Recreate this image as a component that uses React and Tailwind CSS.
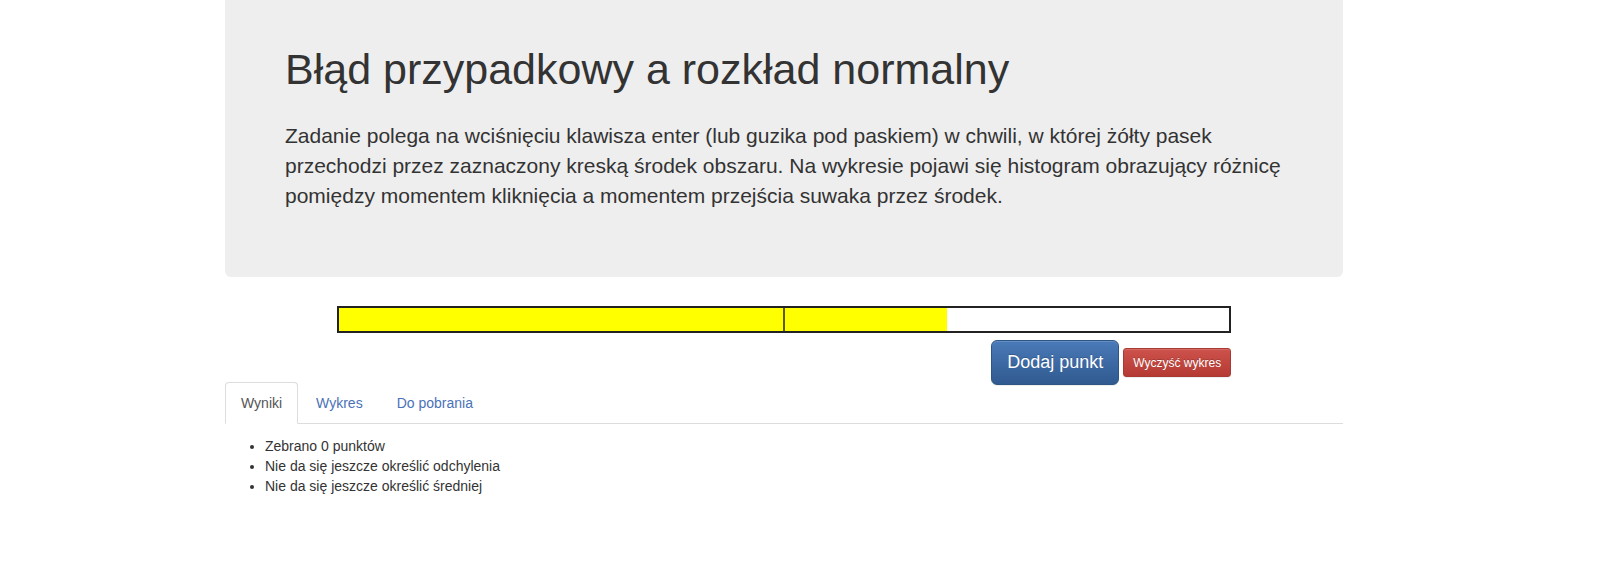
import { useState } from "react";

const font = { fontFamily: '"Liberation Sans", Arial, Helvetica, sans-serif' };

export default function App() {
  const [tab, setTab] = useState("wyniki");
  const progress = 68.3;

  const tabs = [
    { id: "wyniki", label: "Wyniki" },
    { id: "wykres", label: "Wykres" },
    { id: "pobrania", label: "Do pobrania" },
  ];

  return (
    <div className="min-h-[572px] bg-white text-[#333]" style={font}>
      <div className="ml-[225px] w-[1118px]">
        {/* Jumbotron */}
        <div className="bg-[#eee] rounded-b-[6px] px-[60px] pt-[46px] h-[277px]">
          <h1 className="text-[43px] leading-[46px] font-normal text-[#333]">
            Błąd przypadkowy a rozkład normalny
          </h1>
          <p className="mt-[29px] text-[21px] leading-[30px]">
            Zadanie polega na wciśnięciu klawisza enter (lub guzika pod paskiem) w chwili, w której żółty pasek
            przechodzi przez zaznaczony kreską środek obszaru. Na wykresie pojawi się histogram obrazujący różnicę
            pomiędzy momentem kliknięcia a momentem przejścia suwaka przez środek.
          </p>
        </div>

        {/* Bar + buttons */}
        <div className="w-[80%] mx-auto mt-[29px]">
          <div className="relative h-[27px] border-2 border-[#222] bg-white">
            <div className="h-full bg-[#ffff00]" style={{ width: `${progress}%` }} />
            <div className="absolute top-0 bottom-0 left-1/2 w-[2px] -translate-x-1/2 bg-[#5c5c00]" />
          </div>

          <div className="flex justify-end items-center gap-[4px] mt-[7px]">
            <button className="w-[128px] h-[45px] text-[18px] leading-[23px] text-white rounded-[6px] border border-[#2e5685] bg-gradient-to-b from-[#4a7ab8] to-[#305a90] shadow-[inset_0_1px_0_rgba(255,255,255,0.15),0_1px_1px_rgba(0,0,0,0.075)] [text-shadow:0_-1px_0_rgba(0,0,0,0.2)]">
              Dodaj punkt
            </button>
            <button className="w-[108px] h-[29px] text-[12px] leading-[18px] text-white rounded-[3px] border border-[#a93a33] bg-gradient-to-b from-[#cc524b] to-[#b43a33] shadow-[inset_0_1px_0_rgba(255,255,255,0.15),0_1px_1px_rgba(0,0,0,0.075)] [text-shadow:0_-1px_0_rgba(0,0,0,0.2)]">
              Wyczyść wykres
            </button>
          </div>
        </div>

        {/* Tabs */}
        <ul className="flex border-b border-[#ddd] -mt-[3px] text-[14px]">
          {tabs.map((t) => (
            <li key={t.id} className="-mb-px mr-[2px]">
              <a
                href="#"
                onClick={(e) => {
                  e.preventDefault();
                  setTab(t.id);
                }}
                className={
                  tab === t.id
                    ? "block px-[15px] py-[10px] leading-[20px] border border-[#ddd] border-b-transparent rounded-t-[4px] bg-white text-[#555]"
                    : "block px-[15px] py-[10px] leading-[20px] border border-transparent rounded-t-[4px] text-[#4a72b8]"
                }
              >
                {t.label}
              </a>
            </li>
          ))}
        </ul>

        {tab === "wyniki" && (
          <ul className="list-disc pl-[40px] mt-[12px] text-[14px] leading-[20px]">
            <li>Zebrano 0 punktów</li>
            <li>Nie da się jeszcze określić odchylenia</li>
            <li>Nie da się jeszcze określić średniej</li>
          </ul>
        )}
      </div>
    </div>
  );
}
